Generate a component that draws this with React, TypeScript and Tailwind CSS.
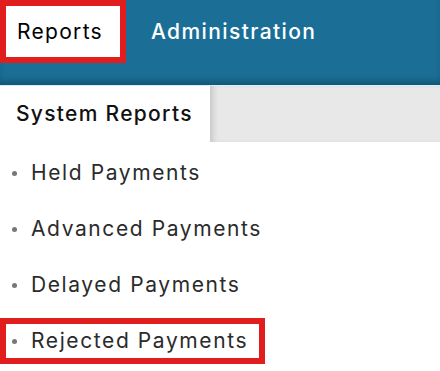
import React from 'react';

const items = ['Held Payments', 'Advanced Payments', 'Delayed Payments', 'Rejected Payments'];

const font = { fontFamily: 'Inter, "Noto Sans", sans-serif' };

const App: React.FC = () => {
  return (
    <div className="w-[440px] h-[371px] bg-white overflow-hidden" style={font}>
      <header className="relative h-[85px] bg-[#1b6f97] flex items-start shadow-[inset_0_-6px_6px_-2px_rgba(0,0,0,0.25)]">
        <div className="w-[126px] h-[63px] border-[6px] border-[#e21d1d] bg-white flex items-center pl-[11px]">
          <span className="text-[21px] text-black tracking-[1.3px]">Reports</span>
        </div>
        <div className="h-[63px] flex items-center pl-[25px]">
          <span className="text-[21px] font-medium text-white tracking-[1.4px]">Administration</span>
        </div>
      </header>
      <div className="h-px bg-[#d3eef8]" />
      <div className="flex h-[56px]">
        <div className="w-[210px] bg-white flex items-center pl-4">
          <span className="text-[21px] font-medium text-[#111] tracking-[1.3px]">System Reports</span>
        </div>
        <div className="flex-1 bg-[#e8e8e8] shadow-[inset_6px_0_6px_-3px_rgba(0,0,0,0.15)]" />
      </div>
      <ul className="pt-[3px]">
        {items.map((item, i) => (
          <li key={item} className="h-[56px] flex items-center">
            {i === 3 ? (
              <div className="w-[265px] h-[46px] border-[6px] border-[#e21d1d] flex items-center">
                <span className="w-[5px] h-[5px] rounded-full bg-[#777] ml-[6px]" />
                <span className="text-[21px] text-[#2b2b2b] ml-[14px] tracking-[1.6px]">{item}</span>
              </div>
            ) : (
              <>
                <span className="w-[5px] h-[5px] rounded-full bg-[#777] ml-[12px]" />
                <span className="text-[21px] text-[#2b2b2b] ml-[14px] tracking-[1.6px]">{item}</span>
              </>
            )}
          </li>
        ))}
      </ul>
    </div>
  );
};

export default App;
